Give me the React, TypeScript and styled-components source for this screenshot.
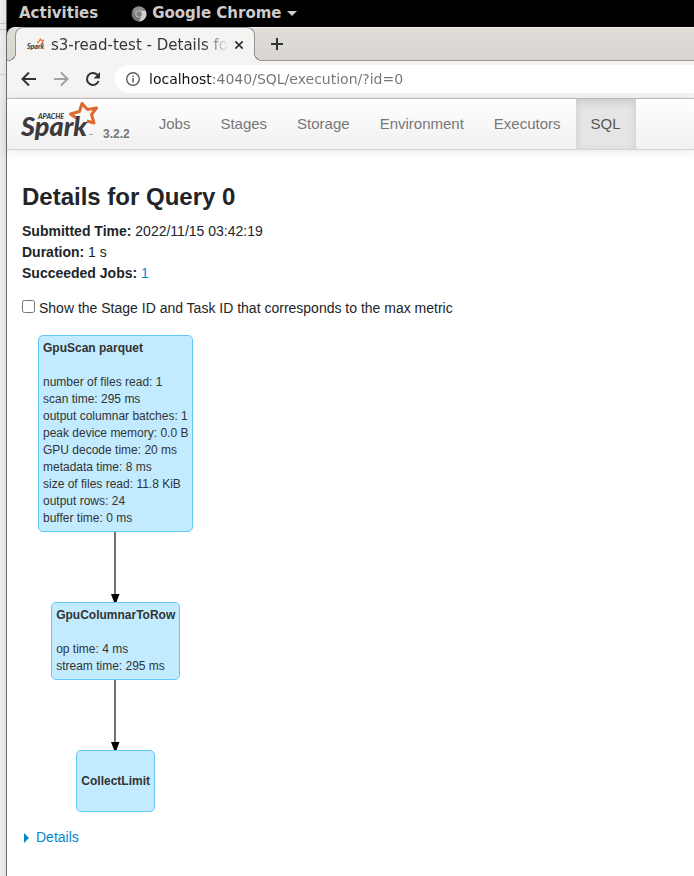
import React, { useState } from "react";
import styled, { createGlobalStyle } from "styled-components";

const GlobalStyle = createGlobalStyle`
  *, *::before, *::after { box-sizing: border-box; }
  html, body, #root { height: 100%; }
  body {
    margin: 0;
    background: #fff;
    color: #212529;
    font: 14px/21px "Liberation Sans", Arial, sans-serif;
    overflow-x: hidden;
  }
  button, input { font: inherit; color: inherit; }
  button { background: none; border: 0; padding: 0; cursor: pointer; }
  svg { display: block; flex: none; }
`;

const Desktop = styled.div`
  display: flex;
  min-height: 100%;
  overflow: hidden;
`;

const BehindWindow = styled.div`
  flex: none;
  width: 6px;
  background:
    linear-gradient(#c4c4c4, #c4c4c4) 0 23px / 100% 1px no-repeat,
    linear-gradient(#c4c4c4, #c4c4c4) 0 29px / 100% 1px no-repeat,
    linear-gradient(#cfcfcf, #cfcfcf) 0 74px / 100% 1px no-repeat,
    linear-gradient(90deg, #ededed, #e2e2e2);
`;

const Screen = styled.div`
  flex: 1;
  min-width: 0;
  border-left: 1px solid #6b6b6b;
`;

const SystemBar = styled.header`
  display: flex;
  align-items: center;
  height: 27px;
  padding: 0 12px;
  gap: 33px;
  background: #000;
  color: #ccc;
  font: bold 15px/27px "DejaVu Sans", sans-serif;
`;

const SystemItem = styled.button`
  display: flex;
  align-items: center;
  gap: 5px;
  white-space: nowrap;
`;

const Browser = styled.div`
  background: #000;
`;

const TabStrip = styled.div`
  display: flex;
  height: 34px;
  padding-left: 8px;
  border-top: 1px solid #f4f3f2;
  border-bottom: 1px solid #989692;
  border-top-left-radius: 8px;
  background: linear-gradient(#e1deda, #d8d4cf);
`;

const Tab = styled.div`
  position: relative;
  display: flex;
  align-items: center;
  width: 240px;
  height: 34px;
  margin-top: -1px;
  padding: 0 8px 0 11px;
  border: 1px solid #989692;
  border-bottom: 0;
  border-radius: 8px 8px 0 0;
  background: #f5f4f2;
  color: #33393b;
  font: 15px/32px "DejaVu Sans", sans-serif;

  &::before, &::after {
    content: "";
    position: absolute;
    bottom: 0;
    width: 8px;
    height: 8px;
  }
  &::before {
    left: -8px;
    background: radial-gradient(circle at 0 0, transparent 7px, #989692 7px, #989692 8px, #f5f4f2 8px);
  }
  &::after {
    right: -8px;
    background: radial-gradient(circle at 100% 0, transparent 7px, #989692 7px, #989692 8px, #f5f4f2 8px);
  }
`;

const TabTitle = styled.span`
  flex: 1;
  min-width: 0;
  margin: 0 4px 0 7px;
  overflow: hidden;
  white-space: nowrap;
  mask-image: linear-gradient(90deg, #000 calc(100% - 24px), transparent);
`;

const IconButton = styled.button<{ $size: number }>`
  display: flex;
  align-items: center;
  justify-content: center;
  flex: none;
  width: ${(p) => p.$size}px;
  height: ${(p) => p.$size}px;
`;

const NewTab = styled(IconButton)`
  margin: 4px 0 0 10px;
`;

const Toolbar = styled.div`
  display: flex;
  align-items: center;
  height: 38px;
  padding: 0 0 1px 10px;
  background: #f5f4f2;
  border-bottom: 1px solid #c6bfb8;
`;

const NavButtons = styled.div`
  display: flex;
  gap: 8px;
`;

const AddressBar = styled.label`
  display: flex;
  align-items: center;
  flex: 1;
  gap: 9px;
  height: 28px;
  margin-left: 10px;
  padding-left: 11px;
  border-radius: 14px 0 0 14px;
  background: #fff;
`;

const AddressInput = styled.input`
  flex: 1;
  min-width: 0;
  height: 28px;
  padding: 0;
  border: 0;
  outline: 0;
  font: 14px/28px "DejaVu Sans", sans-serif;
  color: transparent;
  background: linear-gradient(90deg, #111 63px, #757575 63px);
  background-clip: text;
`;

const Page = styled.div`
  background: #fff;
`;

const NavBar = styled.nav`
  display: flex;
  height: 51px;
  padding-left: 14px;
  border-bottom: 1px solid #d4d4d4;
  background: linear-gradient(#fff, #f0f0f0);
  box-shadow: 0 1px 10px rgba(0, 0, 0, 0.1);
`;

const Brand = styled.a`
  display: flex;
  align-items: flex-start;
  gap: 4px;
  margin-right: 14px;
  color: #777;
  text-decoration: none;
`;

const Version = styled.span`
  margin-top: 26px;
  font-size: 12px;
  line-height: 18px;
  font-weight: bold;
`;

const NavLink = styled.a<{ $active?: boolean }>`
  padding: 0 15px;
  font-size: 15px;
  line-height: 50px;
  text-decoration: none;
  color: ${(p) => (p.$active ? "#555" : "#777")};
  background: ${(p) => (p.$active ? "#e5e5e5" : "none")};
  box-shadow: ${(p) => (p.$active ? "inset 0 3px 8px rgba(0, 0, 0, 0.125)" : "none")};
`;

const Content = styled.main`
  padding: 32px 15px;
`;

const Heading = styled.h1`
  margin: 0 0 9px;
  font-size: 24px;
  line-height: 30px;
`;

const Summary = styled.ul`
  margin: 0 0 14px;
  padding: 0;
  list-style: none;
`;

const Link = styled.a`
  color: #0088cc;
  text-decoration: none;
`;

const MetricToggle = styled.label`
  display: flex;
  align-items: center;
  gap: 4px;
`;

const Checkbox = styled.input`
  width: 13px;
  height: 13px;
  margin: 0 0 4px;
`;

const PlanGraph = styled.div`
  display: flex;
  flex-direction: column;
  align-items: center;
  width: max-content;
  margin: 16px 0 15px 16px;
`;

const PlanNode = styled.section`
  display: flex;
  flex-direction: column;
  justify-content: center;
  min-height: 62px;
  padding: 4px;
  border: 1px solid #62c8fc;
  border-radius: 5px;
  background: #c3ebff;
  color: #333;
  font-size: 12px;
  line-height: 17px;
  white-space: nowrap;
`;

const NodeTitle = styled.h2`
  margin: 0;
  font-size: 12px;
  line-height: 17px;
`;

const Metrics = styled.ul`
  margin: 17px 0 0;
  padding: 0;
  list-style: none;
`;

const DetailsToggle = styled.button`
  display: flex;
  align-items: center;
  gap: 7px;
  margin-left: 2px;
  color: #0088cc;
`;

const Caret = ({ down }: { down?: boolean }) => (
  <svg width="5" height="10" viewBox="0 0 5 10" fill="#0088cc" aria-hidden="true">
    <path d={down ? "M0 3h5L2.500 8z" : "M0 0l5 5-5 5z"} />
  </svg>
);

const ChromiumIcon = () => (
  <svg width="16" height="16" viewBox="0 0 16 16" aria-hidden="true">
    <circle cx="8" cy="8" r="7.500" fill="#777" />
    <path d="M8 4.500h6.600A7.500 7.500 0 0 1 8 15.500l3-6z" fill="#d0d0d0" />
    <path d="M1.500 4.200A7.500 7.500 0 0 1 14.600 4.500H8A3.500 3.500 0 0 0 4.700 9z" fill="#909090" />
    <circle cx="8" cy="8" r="3.600" fill="#c8c8c8" />
    <circle cx="8" cy="8" r="2.700" fill="#7d7d7d" />
  </svg>
);

const SparkLogo = () => (
  <svg width="78" height="42" viewBox="0 0 78 42" role="img" aria-label="Apache Spark">
    <path
      d="M56 19.500L49.500 15l9-2.500L61 4.500l5.500 6 9-1.500L70.500 15.500l2.500 8.500-7-2"
      fill="none"
      stroke="#dd6a2c"
      strokeWidth="3"
      strokeLinejoin="round"
    />
    <text x="17" y="20" fill="#3c3a3e" fontFamily="Lato, sans-serif" fontSize="7" fontWeight="900" fontStyle="italic">
      APACHE
    </text>
    <text x="0" y="37" fill="#3c3a3e" fontFamily="Lato, sans-serif" fontSize="27" fontWeight="900" fontStyle="italic">
      Spark
    </text>
    <path d="M68.500 35.500h3" stroke="#999" />
  </svg>
);

const Favicon = () => (
  <svg width="17" height="14" viewBox="0 0 17 14" aria-hidden="true">
    <path
      d="M11.500 5.500L10.500 4l2-1 .8-2 1.200 1.500 2-.3-1 1.800.6 2-1.600-.5"
      fill="none"
      stroke="#e8743a"
      strokeWidth="1.200"
    />
    <text x="0" y="11" fill="#3c3a3e" fontFamily="Lato, sans-serif" fontSize="7" fontWeight="900" fontStyle="italic">
      Spark
    </text>
  </svg>
);

const BackArrow = ({ color, flip }: { color: string; flip?: boolean }) => (
  <svg width="16" height="16" viewBox="0 0 16 16" fill="none" stroke={color} strokeWidth="2" aria-hidden="true">
    <path d={flip ? "M1 8h13M8 1.500L14.500 8 8 14.500" : "M15 8H2M8 1.500L1.500 8 8 14.500"} />
  </svg>
);

const ReloadIcon = () => (
  <svg width="16" height="16" viewBox="0 0 16 16" aria-hidden="true">
    <path d="M13.600 10A6 6 0 1 1 12.300 3.800L14 5.500" fill="none" stroke="#2e3436" strokeWidth="2" />
    <path d="M15 1v6.500H8.500z" fill="#2e3436" />
  </svg>
);

const InfoIcon = () => (
  <svg width="14" height="14" viewBox="0 0 14 14" fill="none" stroke="#5a5e60" aria-hidden="true">
    <circle cx="7" cy="7" r="6.300" strokeWidth="1.400" />
    <path d="M7 6v4.500M7 3.500V5" strokeWidth="1.500" />
  </svg>
);

const CloseIcon = () => (
  <svg width="10" height="10" viewBox="0 0 10 10" stroke="#2e3436" strokeWidth="1.700" aria-hidden="true">
    <path d="M1.300 1.300l7.400 7.400M8.700 1.300L1.300 8.700" />
  </svg>
);

const PlusIcon = () => (
  <svg width="12" height="12" viewBox="0 0 12 12" stroke="#2e3436" strokeWidth="2" aria-hidden="true">
    <path d="M6 0v12M0 6h12" />
  </svg>
);

const MenuCaret = () => (
  <svg width="10" height="5" viewBox="0 0 10 5" fill="#ccc" aria-hidden="true">
    <path d="M0 0h10L5 5z" />
  </svg>
);

const Edge = () => (
  <svg width="9" height="70" viewBox="0 0 9 70" aria-hidden="true">
    <path d="M4 0v62" stroke="#707070" strokeWidth="2" />
    <path d="M0 62h8.500L5.500 70h-2.500z" fill="#000" />
  </svg>
);

const pages = ["Jobs", "Stages", "Storage", "Environment", "Executors", "SQL"];

const plan: { title: string; metrics: string[] }[] = [
  {
    title: "GpuScan parquet",
    metrics: [
      "number of files read: 1",
      "scan time: 295 ms",
      "output columnar batches: 1",
      "peak device memory: 0.0 B",
      "GPU decode time: 20 ms",
      "metadata time: 8 ms",
      "size of files read: 11.8 KiB",
      "output rows: 24",
      "buffer time: 0 ms",
    ],
  },
  { title: "GpuColumnarToRow", metrics: ["op time: 4 ms", "stream time: 295 ms"] },
  { title: "CollectLimit", metrics: [] },
];

export default function App() {
  const [url, setUrl] = useState("localhost:4040/SQL/execution/?id=0");
  const [open, setOpen] = useState(false);

  return (
    <>
      <GlobalStyle />
      <Desktop>
        <BehindWindow />
        <Screen>
          <SystemBar>
            <SystemItem>Activities</SystemItem>
            <SystemItem>
              <ChromiumIcon />
              Google Chrome
              <MenuCaret />
            </SystemItem>
          </SystemBar>
          <Browser>
            <TabStrip>
              <Tab>
                <Favicon />
                <TabTitle>s3-read-test - Details for Query 0</TabTitle>
                <IconButton $size={14} aria-label="Close tab">
                  <CloseIcon />
                </IconButton>
              </Tab>
              <NewTab $size={24} aria-label="New tab">
                <PlusIcon />
              </NewTab>
            </TabStrip>
            <Toolbar>
              <NavButtons>
                <IconButton $size={24} aria-label="Back">
                  <BackArrow color="#2e3436" />
                </IconButton>
                <IconButton $size={24} aria-label="Forward">
                  <BackArrow color="#a0a2a2" flip />
                </IconButton>
                <IconButton $size={24} aria-label="Reload">
                  <ReloadIcon />
                </IconButton>
              </NavButtons>
              <AddressBar>
                <InfoIcon />
                <AddressInput
                  aria-label="Address"
                  spellCheck={false}
                  value={url}
                  onChange={(e) => setUrl(e.target.value)}
                />
              </AddressBar>
            </Toolbar>
          </Browser>
          <Page>
            <NavBar>
              <Brand href="#">
                <SparkLogo />
                <Version>3.2.2</Version>
              </Brand>
              {pages.map((name) => (
                <NavLink key={name} href="#" $active={name === "SQL"}>
                  {name}
                </NavLink>
              ))}
            </NavBar>
            <Content>
              <Heading>Details for Query 0</Heading>
              <Summary>
                <li>
                  <strong>Submitted Time:</strong> 2022/11/15 03:42:19
                </li>
                <li>
                  <strong>Duration:</strong> 1 s
                </li>
                <li>
                  <strong>Succeeded Jobs:</strong> <Link href="#">1</Link>
                </li>
              </Summary>
              <MetricToggle>
                <Checkbox type="checkbox" />
                Show the Stage ID and Task ID that corresponds to the max metric
              </MetricToggle>
              <PlanGraph>
                {plan.map((node, i) => (
                  <React.Fragment key={node.title}>
                    {i > 0 && <Edge />}
                    <PlanNode>
                      <NodeTitle>{node.title}</NodeTitle>
                      {node.metrics.length > 0 && (
                        <Metrics>
                          {node.metrics.map((m) => (
                            <li key={m}>{m}</li>
                          ))}
                        </Metrics>
                      )}
                    </PlanNode>
                  </React.Fragment>
                ))}
              </PlanGraph>
              <DetailsToggle aria-expanded={open} onClick={() => setOpen(!open)}>
                <Caret down={open} />
                Details
              </DetailsToggle>
            </Content>
          </Page>
        </Screen>
      </Desktop>
    </>
  );
}
